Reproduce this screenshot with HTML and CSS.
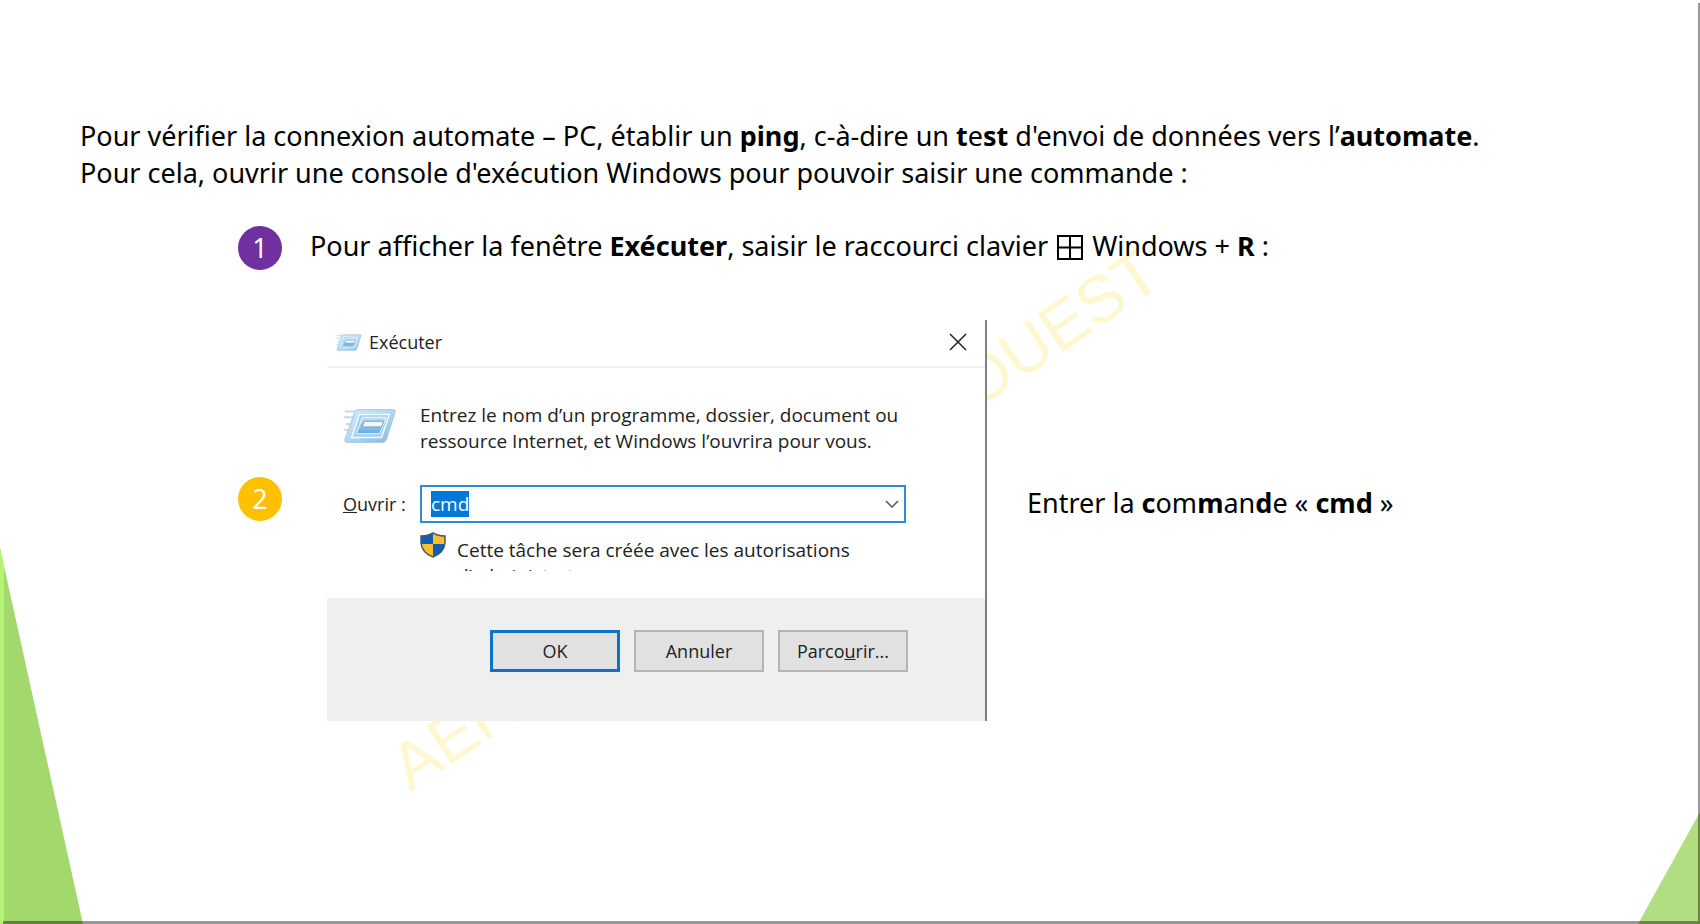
FILE: index.html
```html
<!DOCTYPE html>
<html lang="fr">
<head>
    <meta charset="UTF-8">
    <meta name="viewport" content="width=device-width, initial-scale=1.0">
    <title>Vérifier la connexion automate - PC</title>
    <link rel="stylesheet" href="styles.css">
</head>
<body>
    <main class="slide">
        <div class="watermark" aria-hidden="true"><span>AER</span><span>OUEST</span></div>
        <div class="corner corner-left"></div>
        <div class="corner corner-right"></div>

        <div class="content">
            <p class="intro">
                Pour vérifier la connexion automate – PC, établir un <b>ping</b>, c-à-dire un <b>t</b>e<b>st</b> d'envoi de données vers l’<b>automate</b>.<br>
                Pour cela, ouvrir une console d'exécution Windows pour pouvoir saisir une commande :
            </p>

            <div class="step">
                <span class="badge badge-purple">1</span>
                <p>Pour afficher la fenêtre <b>Exécuter</b>, saisir le raccourci clavier
                    <svg class="win-key" width="26" height="26" viewBox="0 0 26 26" fill="none" stroke="#000" stroke-width="2">
                        <path d="M1 2H25V25H1ZM13 2V25M1 13.500H25"/>
                    </svg>
                    Windows + <b>R</b> :</p>
            </div>

            <div class="step step-dialog">
                <span class="badge badge-yellow">2</span>

                <form class="dialog">
                    <div class="title-bar">
                        <svg width="26" height="19" viewBox="0 0 56 36">
                            <use href="#run-icon"/>
                        </svg>
                        <span>Exécuter</span>
                        <button type="button" class="close" aria-label="Fermer">
                            <svg width="18" height="18" viewBox="0 0 18 18" fill="none" stroke="#222" stroke-width="1.500">
                                <path d="M1 1L17 17M17 1L1 17"/>
                            </svg>
                        </button>
                    </div>

                    <div class="dialog-body">
                        <svg class="run-icon" width="54" height="36" viewBox="0 0 56 36">
                            <defs>
                                <linearGradient id="blue" x1="0" y1="0" x2="1" y2="1">
                                    <stop offset="0" stop-color="#d3eaf7"/>
                                    <stop offset="0.500" stop-color="#b3d8f0"/>
                                    <stop offset="1" stop-color="#7fb5dd"/>
                                </linearGradient>
                                <linearGradient id="pane" x1="0" y1="0" x2="0" y2="1">
                                    <stop offset="0" stop-color="#c5e2f6"/>
                                    <stop offset="1" stop-color="#62abe3"/>
                                </linearGradient>
                            </defs>
                            <g id="run-icon">
                                <path d="M2 3H14M1 9H12M3 16H10M1 22H8" stroke="#c3dbea" stroke-width="2"/>
                                <path d="M15 1H52Q55 1 54 4L45 32Q44 35 41 35H5Q1 35 2 32L12 4Q13 1 15 1Z" fill="url(#blue)" stroke="#a3c8e2"/>
                                <path d="M17 6H48L40 30H9Z" fill="#a4d0ee" stroke="#f4fbff" stroke-width="1.500"/>
                                <path d="M20 9H45L38 26H14Z" fill="url(#pane)" stroke="#edf8ff"/>
                                <path d="M22 13H42L40 19H20Z" fill="#eef7fc" stroke="#7d97b3"/>
                            </g>
                        </svg>
                        <p class="message">Entrez le nom d’un programme, dossier, document ou ressource Internet, et Windows l’ouvrira pour vous.</p>

                        <label for="command"><u>O</u>uvrir :</label>
                        <div class="combo">
                            <input type="text" id="command" name="command" value="cmd" autocomplete="off" spellcheck="false" autofocus>
                            <button type="button" class="arrow" aria-label="Dérouler">
                                <svg width="14" height="8" viewBox="0 0 14 8" fill="none" stroke="#555" stroke-width="1.500">
                                    <path d="M1 1L7 7L13 1"/>
                                </svg>
                            </button>
                        </div>

                        <div class="notice">
                            <svg width="26" height="26" viewBox="0 0 26 26">
                                <path d="M13 1Q8 4 1 4V12H13Z" fill="#0b61b8"/>
                                <path d="M13 1Q18 4 25 4V12H13Z" fill="#fbbe2c"/>
                                <path d="M1 12Q2 21 13 25V12Z" fill="#fbbe2c"/>
                                <path d="M25 12Q24 21 13 25V12Z" fill="#0b61b8"/>
                                <path d="M13 1Q8 4 1 4V11Q2 21 13 25Q24 21 25 11V4Q18 4 13 1Z" fill="none" stroke="#4d5a62" stroke-width="1.500"/>
                            </svg>
                            <p>Cette tâche sera créée avec les autorisations d’administrateur.</p>
                        </div>
                    </div>

                    <div class="dialog-buttons">
                        <button type="submit" class="default">OK</button>
                        <button type="button">Annuler</button>
                        <button type="button">Parco<u>u</u>rir...</button>
                    </div>
                </form>

                <p>Entrer la <b>c</b>om<b>m</b>an<b>d</b>e « <b>cmd</b> »</p>
            </div>
        </div>
    </main>

    <script>
        // Sélectionner la commande à l'ouverture, comme dans Windows
        const commandInput = document.getElementById('command');
        commandInput.focus();
        commandInput.select();

        document.querySelector('.dialog').addEventListener('submit', e => e.preventDefault());
    </script>
</body>
</html>
```

FILE: styles.css
```css
* {
    box-sizing: border-box;
}

body {
    margin: 0;
    background-color: #ffffff;
    color: #000000;
    font-family: "Noto Sans", "Open Sans", sans-serif;
    font-size: 27px;
    line-height: 37px;
}

p {
    margin: 0;
}

.slide {
    position: relative;
    min-height: 100vh;
    padding: 117px 80px 60px;
    overflow: hidden;
}

/* bord en relief */
.slide::after {
    content: "";
    position: absolute;
    inset: 3px 0 0 3px;
    border-right: 2px solid rgba(0, 0, 0, 0.4);
    border-bottom: 3px solid rgba(0, 0, 0, 0.4);
    pointer-events: none;
}

.content {
    position: relative;
}

/* filigrane et coins verts */
.watermark {
    position: absolute;
    left: 416px;
    top: 734px;
    width: 910px;
    display: flex;
    justify-content: space-between;
    font-family: "Liberation Sans", Arial, sans-serif;
    font-size: 66px;
    line-height: 66px;
    color: #fff7cf;
    transform: rotate(-34deg);
    transform-origin: left bottom;
}

.corner {
    position: absolute;
    bottom: 0;
}

.corner-left {
    left: 0;
    width: 83px;
    height: 376px;
    background-color: #a3d86c;
    border-left: 4px solid #b6f274;
    clip-path: polygon(0 0, 100% 100%, 0 100%);
}

.corner-right {
    right: 0;
    width: 62px;
    height: 112px;
    background-color: #b0de80;
    clip-path: polygon(100% 0, 100% 100%, 0 100%);
}

.step {
    display: flex;
    align-items: center;
    gap: 28px;
    margin: 35px 0 0 158px;
}

.badge {
    flex: none;
    width: 44px;
    height: 44px;
    border-radius: 50%;
    color: #ffffff;
    line-height: 44px;
    text-align: center;
}

.badge-purple {
    background-color: #7030a0;
}

.badge-yellow {
    background-color: #ffc000;
}

.step > p {
    margin-bottom: 5px;
}

.win-key {
    margin: -8px 2px;
    vertical-align: 4px;
}

.step-dialog {
    gap: 40px;
    margin-top: 50px;
}

.step-dialog > .badge {
    margin: 0 5px 44px 0;
}

.step-dialog > p {
    margin-bottom: 36px;
}

/* fenêtre Exécuter */
.dialog {
    width: 660px;
    background-color: #ffffff;
    border-right: 2px solid #808080;
    color: #222222;
    font-family: "Open Sans", "Noto Sans", sans-serif;
    font-size: 19px;
    line-height: 26px;
}

.dialog button,
.dialog input {
    padding: 0;
    border: none;
    background: none;
    color: inherit;
    font: inherit;
}

.dialog svg {
    display: block;
}

.title-bar {
    display: flex;
    align-items: center;
    gap: 7px;
    height: 48px;
    padding: 0 18px 2px 9px;
    border-bottom: 2px solid #f2f2f2;
    font-size: 18px;
}

.close {
    margin-left: auto;
}

.dialog-body {
    display: grid;
    grid-template-columns: 77px 486px;
    align-items: center;
    align-content: start;
    height: 230px;
    padding: 34px 0 0 16px;
}

.message {
    margin-bottom: 31px;
}

.run-icon {
    align-self: start;
    margin-top: 6px;
}

.dialog label {
    font-size: 18px;
}

.combo {
    display: flex;
    align-items: center;
    height: 38px;
    padding: 0 5px 0 9px;
    border: 2px solid #2f8ad8;
}

.dialog .combo input {
    flex: 1;
    min-width: 0;
    outline: none;
}

.combo input::selection {
    background-color: #0078d7;
    color: #ffffff;
}

/* la deuxième ligne du message est coupée, comme dans la fenêtre d'origine */
.notice {
    grid-column: 2;
    display: flex;
    gap: 11px;
    height: 48px;
    overflow: hidden;
    padding-top: 9px;
}

.notice p {
    flex: 1;
    padding-top: 5px;
}

.dialog-buttons {
    display: flex;
    justify-content: flex-end;
    gap: 14px;
    padding: 32px 77px 49px 0;
    background-color: #efefef;
}

.dialog .dialog-buttons button {
    width: 130px;
    height: 42px;
    border: 2px solid #b4b4b4;
    background-color: #e1e1e1;
    font-size: 18px;
}

.dialog .dialog-buttons .default {
    border: 3px solid #0f72c9;
}
```
